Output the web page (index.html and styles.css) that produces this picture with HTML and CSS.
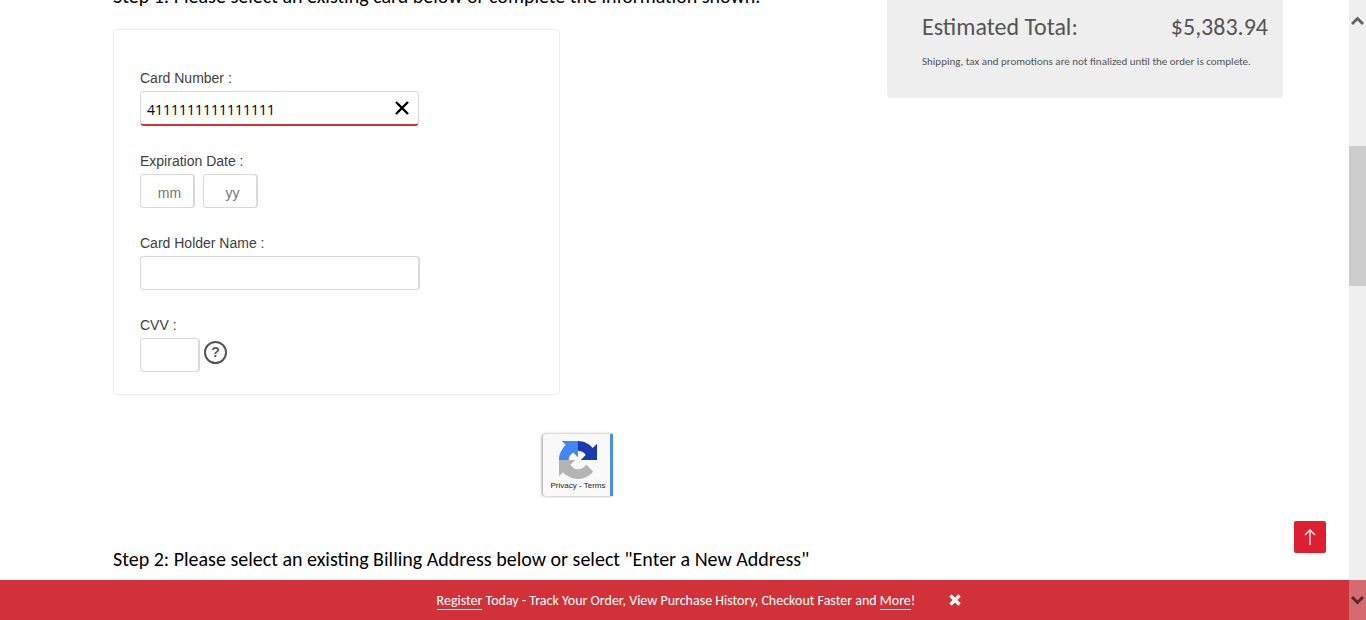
FILE: index.html
```html
<!DOCTYPE html>
<html lang="en">
<head>
<meta charset="utf-8">
<title>Checkout - Payment</title>
<link rel="stylesheet" href="styles.css">
</head>
<body>
<div class="viewport">
  <div class="page">
    <main class="payment">
      <h2 class="step step-first">Step 1: Please select an existing card below or complete the information shown.</h2>
      <form class="card-form">
        <div class="field">
          <label for="number">Card Number :</label>
          <div class="number-box">
            <input id="number" type="text" value="4111111111111111">
            <button class="clear" type="button" aria-label="Clear">
              <svg width="16" height="16" viewBox="0 0 16 16"><path d="M2 2l12 12M14 2L2 14" stroke="#000" stroke-width="2.4"/></svg>
            </button>
          </div>
        </div>
        <div class="field">
          <label for="month">Expiration Date :</label>
          <div class="row">
            <input id="month" class="box date" type="text" placeholder="mm">
            <input class="box date" type="text" placeholder="yy" aria-label="Expiration year">
          </div>
        </div>
        <div class="field">
          <label for="holder">Card Holder Name :</label>
          <input id="holder" class="box holder" type="text">
        </div>
        <div class="field">
          <label for="cvv">CVV :</label>
          <div class="row cvv-row">
            <input id="cvv" class="box cvv" type="text">
            <button class="help" type="button" aria-label="What is CVV?">?</button>
          </div>
        </div>
      </form>
      <div class="captcha">
        <svg width="38" height="38" viewBox="0 0 64 64">
          <path fill="#1c3aa9" d="M64 31.955l-.033-1.37V4.687l-7.16 7.16C50.948 4.674 42.033.093 32.05.093c-10.4 0-19.622 4.96-25.458 12.64l11.736 11.86a15.55 15.55 0 0 1 4.754-5.334c2.05-1.6 4.952-2.906 8.968-2.906.485 0 .86.057 1.135.163 4.976.393 9.288 3.14 11.828 7.124l-8.307 8.307L64 31.953"/>
          <path fill="#4285f4" d="M31.862.094l-1.37.033H4.594l7.16 7.16C4.58 13.147 0 22.06 0 32.046c0 10.4 4.96 19.622 12.64 25.458L24.5 45.768a15.55 15.55 0 0 1-5.334-4.754c-1.6-2.05-2.906-4.952-2.906-8.968 0-.485.057-.86.163-1.135.393-4.976 3.14-9.288 7.124-11.828l8.307 8.307L31.86.095"/>
          <path fill="#b4b4b4" d="M.001 32.045l.033 1.37v25.898l7.16-7.16c5.86 7.173 14.774 11.754 24.76 11.754 10.4 0 19.622-4.96 25.458-12.64l-11.736-11.86a15.55 15.55 0 0 1-4.754 5.334c-2.05 1.6-4.952 2.906-8.968 2.906-.485 0-.86-.057-1.135-.163-4.976-.393-9.288-3.14-11.828-7.124l8.307-8.307L0 32.045"/>
        </svg>
        <div class="captcha-links"><a href="#">Privacy</a> - <a href="#">Terms</a></div>
      </div>
      <h2 class="step">Step 2: Please select an existing Billing Address below or select "Enter a New Address"</h2>
    </main>
    <aside class="summary">
      <div class="total"><span>Estimated Total:</span><span>$5,383.94</span></div>
      <p class="note">Shipping, tax and promotions are not finalized until the order is complete.</p>
    </aside>
  </div>
  <div class="scrollbar">
    <svg class="arrow" width="13" height="10" viewBox="0 0 13 10"><path d="M1 8l5.500-5.500L12 8" fill="none" stroke="#606060" stroke-width="2.800"/></svg>
    <div class="thumb"></div>
  </div>
</div>
<button class="to-top" type="button" aria-label="Back to top">
  <svg width="14" height="18" viewBox="0 0 14 18"><path d="M7 2v15" stroke="#f4a9ae" stroke-width="2"/><path d="M2 7l5-5 5 5" fill="none" stroke="#fff" stroke-width="1.300"/></svg>
</button>
<div class="banner">
  <span class="banner-text"><a href="#">Register</a> Today - Track Your Order, View Purchase History, Checkout Faster and <a href="#">More</a>!</span>
  <button class="dismiss" type="button" aria-label="Close">
    <svg width="12" height="12" viewBox="0 0 12 12"><path d="M1.500 1.500l9 9M10.500 1.500l-9 9" stroke="#fff" stroke-width="3.200"/></svg>
  </button>
  <div class="banner-end">
    <svg width="13" height="10" viewBox="0 0 13 10"><path d="M1 2l5.500 5.500L12 2" fill="none" stroke="#56262a" stroke-width="2.800"/></svg>
  </div>
</div>
</body>
</html>
```
FILE: styles.css
```css
* { box-sizing: border-box; }
body {
  margin: 0;
  background: #fff;
  color: #000;
  font-family: Carlito, Calibri, "Open Sans", sans-serif;
  overflow: hidden;
}
button { border: 0; padding: 0; background: none; }
svg { display: block; }
.viewport {
  display: flex;
  height: 100vh;
  overflow: hidden;
}
.page {
  flex: 1;
  display: grid;
  grid-template-columns: 1fr 396px;
  align-items: start;
  padding: 0 66px 0 113px;
}
.step {
  margin: 0;
  font-size: 20px;
  line-height: 24px;
  font-weight: 400;
  white-space: nowrap;
}
.step-first { margin: -16px 0 21px; }
.card-form {
  display: flex;
  flex-direction: column;
  gap: 25px;
  width: 447px;
  padding: 38px 26px 22px;
  border: 1px solid #ededed;
  border-radius: 4px;
  font-family: "Liberation Sans", Arial, sans-serif;
}
.field label {
  display: block;
  margin-bottom: 3px;
  font-size: 14px;
  line-height: 20px;
  color: #404040;
}
.field input {
  font-family: "Liberation Sans", Arial, sans-serif;
  font-size: 14px;
}
.number-box {
  display: flex;
  align-items: center;
  width: 279px;
  height: 35px;
  padding: 0 8px 0 6px;
  border: 1px solid #d9d9d9;
  border-bottom: 2px solid #d13239;
  border-radius: 4px;
}
.number-box input {
  flex: 1;
  min-width: 0;
  padding: 3px 0 0;
  border: 0;
  outline: 0;
  font-family: "Open Sans", sans-serif;
}
.row { display: flex; gap: 8px; }
.box {
  display: block;
  height: 34px;
  padding: 4px 0 0;
  border: 1px solid #d9d9d9;
  border-right-width: 2px;
  border-radius: 4px;
}
.box::placeholder { color: #757575; }
.date { width: 55px; padding-left: 5px; text-align: center; }
.holder { width: 280px; }
.cvv { width: 60px; }
.cvv-row { gap: 4px; }
.help {
  width: 23px;
  height: 23px;
  margin-top: 3px;
  border: 2px solid #555;
  border-radius: 50%;
  color: #555;
  font: bold 14px/19px "Liberation Sans", Arial, sans-serif;
}
.captcha {
  display: flex;
  flex-direction: column;
  align-items: center;
  gap: 2px;
  width: 70px;
  margin: 39px 0 51px 430px;
  padding: 7px 0 5px 3px;
  border-right: 3px solid #4a90e2;
  border-radius: 3px 0 0 3px;
  background: #f9f9f9;
  box-shadow: -1px 0 3px #999;
}
.captcha-links {
  font: 8px/10px "Liberation Sans", Arial, sans-serif;
  white-space: nowrap;
}
.captcha-links a { color: #222; text-decoration: none; }
.summary {
  padding: 12px 15px 28px 35px;
  border-radius: 0 0 4px 4px;
  background: #eee;
  color: #555;
}
.total {
  display: flex;
  justify-content: space-between;
  font-size: 24px;
  line-height: 30px;
}
.note {
  margin: 12px 0 0;
  font-size: 11px;
  line-height: 16px;
  white-space: nowrap;
}
.scrollbar {
  width: 17px;
  background: #f0f0f0;
}
.arrow { margin: 16px 2px 0; }
.thumb {
  height: 140px;
  margin-top: 120px;
  background: #cdcdcd;
}
.to-top {
  position: fixed;
  right: 40px;
  bottom: 67px;
  display: grid;
  place-items: center;
  width: 32px;
  height: 32px;
  border-radius: 2px;
  background: #dc2032;
}
.banner {
  position: fixed;
  left: 0;
  right: 0;
  bottom: 0;
  display: flex;
  justify-content: center;
  align-items: center;
  gap: 34px;
  height: 40px;
  padding-left: 32px;
  background: #d13239;
  color: #fff;
  font-size: 14px;
}
.banner a {
  color: #fff;
  text-decoration: none;
  border-bottom: 1px solid #fff;
}
.banner-end {
  position: absolute;
  right: 0;
  display: grid;
  place-items: center;
  width: 17px;
  height: 40px;
  background: #d46b71;
}
```
